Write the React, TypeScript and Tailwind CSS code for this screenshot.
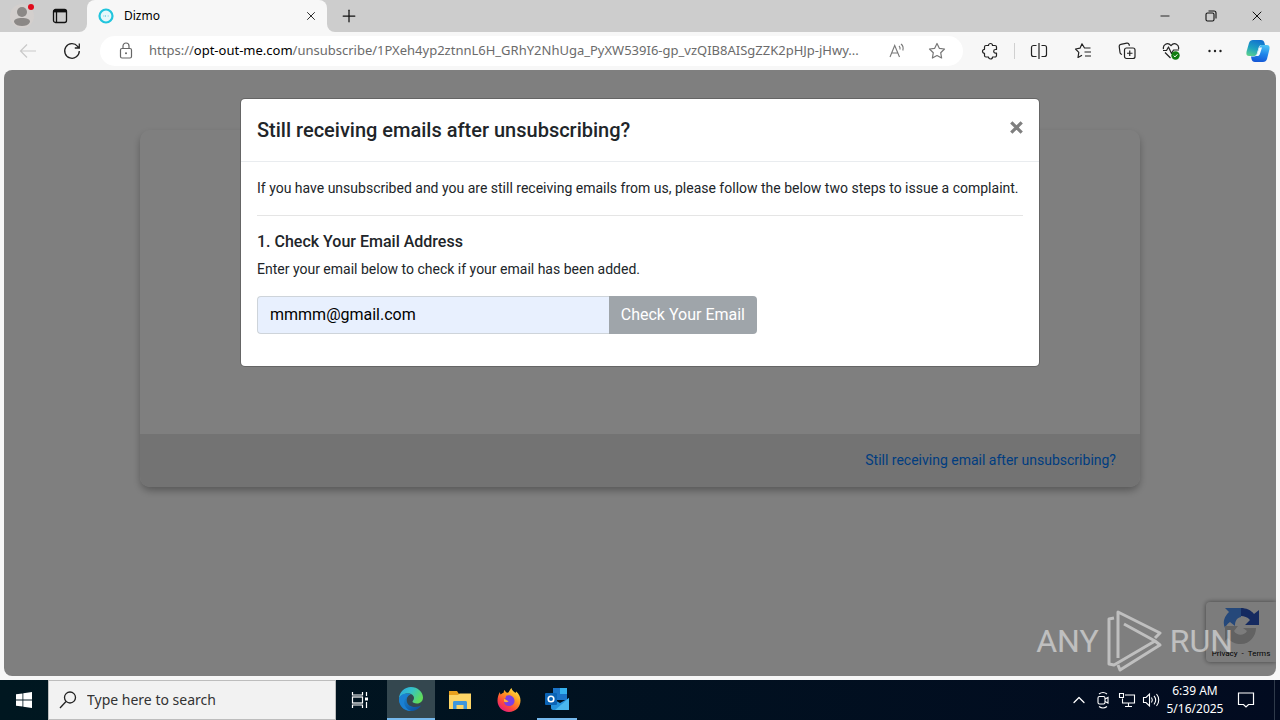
import React, { useState } from "react";

// Icons
import {
  LuChevronUp,
  LuMinus,
  LuPlus,
  LuX,
} from "react-icons/lu";

type IconProps = { className?: string };

const UserIcon = () => (
  <svg viewBox="0 0 24 24" className="size-6" aria-hidden="true">
    <circle cx="12" cy="12" r="12" fill="#d3cfcd" />
    <circle cx="12" cy="8" r="5" fill="#8b8886" />
    <path d="M4 18c0-3 3-4 8-4s8 1 8 4c-1.500 3-4.500 4-8 4s-6.500-1-8-4z" fill="#8b8886" />
    <circle cx="21" cy="3" r="3" fill="#e00b1c" />
  </svg>
);

const WorkspaceIcon = () => (
  <svg viewBox="0 0 16 16" className="size-4" fill="none" stroke="#111" strokeWidth="1.300" aria-hidden="true">
    <rect x="1.500" y="1.500" width="13" height="13" rx="2" />
    <path d="M1.500 3.200h13" strokeWidth="2.400" />
    <path d="M4.500 4v10.500" />
  </svg>
);

const BackIcon = () => (
  <svg viewBox="0 0 18 18" className="size-[18px]" fill="none" stroke="#c9c9c9" strokeWidth="1.200" aria-hidden="true">
    <path d="M17 9H1.500M8 2.500L1.500 9 8 15.500" />
  </svg>
);

const ReloadIcon = () => (
  <svg viewBox="0 0 18 18" className="size-[18px]" fill="none" stroke="#222" strokeWidth="1.300" aria-hidden="true">
    <path d="M16.300 9A7.300 7.300 0 1 1 14.600 4.300L16 6M16.300 1.500V6h-4.500" />
  </svg>
);

const LockIcon = () => (
  <svg viewBox="0 0 16 18" className="h-[18px] w-4" fill="none" stroke="#666" strokeWidth="1.200" aria-hidden="true">
    <rect x="2.500" y="6.500" width="11" height="9.500" rx="1.500" />
    <path d="M5 6.500V4a3 3 0 0 1 6 0v2.500" />
    <circle cx="8" cy="11.300" r="1" fill="#666" stroke="none" />
  </svg>
);

const ReadAloudIcon = () => (
  <svg viewBox="0 0 18 18" className="size-[18px]" fill="none" stroke="#777" strokeWidth="1.100" aria-hidden="true">
    <path d="M2 15L6.700 3.500 11.500 15M3.600 11h6.300M11 4c1 .8 1.300 2 1 3.500M13 2c2 1.500 2.500 4 1.800 6.500" />
  </svg>
);

const StarIcon = () => (
  <svg viewBox="0 0 18 18" className="size-[18px]" fill="none" stroke="#777" strokeWidth="1.200" strokeLinejoin="round" aria-hidden="true">
    <path d="M9 1.500l2.300 4.800 5.200.7-3.800 3.700.9 5.300L9 13.500 4.400 16l.9-5.300L1.500 7l5.200-.7z" />
  </svg>
);

const PuzzleIcon = () => (
  <svg viewBox="0 0 18 18" className="size-[18px]" fill="none" stroke="#222" strokeWidth="1.200" strokeLinejoin="round" aria-hidden="true">
    <path d="M5 3.500h2.500a2 2 0 0 1 4 0H14a1.500 1.500 0 0 1 1.500 1.500v2.500h-1a1.800 1.800 0 0 0 0 3.600h1v2.400a1.500 1.500 0 0 1-1.500 1.500h-2.500a2 2 0 0 1-4 0H5A1.500 1.500 0 0 1 3.500 13.500v-2.200a2 2 0 0 1 0-4V5A1.500 1.500 0 0 1 5 3.500z" />
  </svg>
);

const SplitIcon = () => (
  <svg viewBox="0 0 18 18" className="size-[18px]" fill="none" stroke="#222" strokeWidth="1.200" aria-hidden="true">
    <path d="M9 1v16M6.500 3.500h-3a2 2 0 0 0-2 2v7a2 2 0 0 0 2 2h3M11.500 3.500h3a2 2 0 0 1 2 2v7a2 2 0 0 1-2 2h-3" />
  </svg>
);

const FavoritesIcon = () => (
  <svg viewBox="0 0 18 18" className="size-[18px]" fill="none" stroke="#222" strokeWidth="1.200" strokeLinejoin="round" aria-hidden="true">
    <path d="M16.500 6H10.500L8 1.800 6 6.200 1.500 7l3.300 3.300-.8 5.200 4-2.300M10.500 10h6.500M11 14h6" />
  </svg>
);

const CollectionsIcon = () => (
  <svg viewBox="0 0 18 18" className="size-[18px]" fill="none" stroke="#222" strokeWidth="1.200" aria-hidden="true">
    <rect x="6.500" y="6" width="10.500" height="10.500" rx="2" />
    <path d="M11.750 8.500v5.500M9 11.250h5.500M4 12.500l-1-.5a2 2 0 0 1-1-1.500L1.200 4.500a2 2 0 0 1 1.600-2.200l6-1.200a2 2 0 0 1 2.300 1.400l.4 1.300" />
  </svg>
);

const HealthIcon = () => (
  <svg viewBox="0 0 18 18" className="size-[18px]" fill="none" stroke="#222" strokeWidth="1.200" strokeLinejoin="round" aria-hidden="true">
    <path d="M1.500 7.200C.5 3 5.500-.5 9 3.700c3.500-4.200 8.500-.7 7.500 3.500M3 10.500l5.500 5.500M1 8.500h3.500L6.500 5l3 6.500L11.500 8H17" />
    <circle cx="13.500" cy="13.500" r="4.200" fill="#107c10" stroke="none" />
    <path d="M11.700 13.600l1.300 1.300 2.400-2.600" stroke="#fff" strokeWidth="1" />
  </svg>
);

const MoreIcon = () => (
  <svg viewBox="0 0 18 18" className="size-[18px]" fill="#222" aria-hidden="true">
    <circle cx="3.500" cy="9" r="1.200" />
    <circle cx="9" cy="9" r="1.200" />
    <circle cx="14.500" cy="9" r="1.200" />
  </svg>
);

const CopilotIcon = () => (
  <svg viewBox="0 0 24 24" className="size-6" aria-hidden="true">
    <defs>
      <linearGradient id="copilotLeft" x1="0.600" y1="0" x2="0.200" y2="1">
        <stop offset="0" stopColor="#1272cf" />
        <stop offset="0.550" stopColor="#1fa3c0" />
        <stop offset="1" stopColor="#5bd08d" />
      </linearGradient>
      <linearGradient id="copilotRight" x1="0.600" y1="0" x2="0.400" y2="1">
        <stop offset="0" stopColor="#4bc3f5" />
        <stop offset="0.500" stopColor="#1f86ea" />
        <stop offset="1" stopColor="#1557d6" />
      </linearGradient>
    </defs>
    <path d="M7 1h8c2 0 3 1 3.500 3l.5 2h-3c-2 0-3 1-3.500 3l-1.800 6c-.5 2-1.500 2-3.200 2H3c-3 0-3-3-2-6l2-7c.6-2 2-3 4-3z" fill="url(#copilotLeft)" />
    <path d="M17 23H9c-2 0-3-1-3.500-3L5 17.500h3c2 0 3-1 3.500-3l1.800-6c.5-2 1.500-2.500 3.200-2.500H21c3 0 3 3 2 6l-2 8c-.6 2-2 3-4 3z" fill="url(#copilotRight)" />
    <path d="M13.300 8.500H16l-2 6.200c-.5 1.600-1.200 2.300-3 2.300H8.500c1.500 0 2.400-1 2.900-2.700z" fill="#f2fbff" />
  </svg>
);

const RestoreIcon = () => (
  <svg viewBox="0 0 12 12" className="size-3" fill="none" stroke="#111" strokeWidth="1.100" aria-hidden="true">
    <rect x="1" y="3" width="8" height="8" rx="1.500" />
    <path d="M3.500 1H9a2 2 0 0 1 2 2v5.500" />
  </svg>
);

const RecaptchaIcon = () => (
  <svg viewBox="0 0 40 40" className="size-10" aria-hidden="true">
    <path d="M38 4v15H24l5-5c-2.500-3-6-4-9-4V2c5 0 10 2 13 6z" fill="#2a55c0" />
    <path d="M4 2h16v9c-5 1-6 5-6 9l-5-4c-3 2-4 4-5 6-3-7 0-12 4-16z" fill="#4a90f5" />
    <path d="M4 20h13l-4 5c3 5 10 5 13 0l-4-3h13c0 8-6 16-15 16-6 0-10-2-13-6l-3 3z" fill="#c4c4c4" />
  </svg>
);

const WatermarkIcon = () => (
  <svg viewBox="0 0 55 62" className="h-[62px] w-[55px]" fill="none" stroke="#fff" strokeWidth="3" strokeLinejoin="round" aria-hidden="true">
    <path d="M7 8l-5 1v45l5 1 41-24-31-17M11 48V2l42 21-5 5M11 55l2 5 40-25-5-4" />
  </svg>
);

const WindowsIcon = () => (
  <svg viewBox="0 0 16 16" className="size-4" fill="#fff" aria-hidden="true">
    <path d="M0 2.300L6.500 1.400v6.200H0zM7.300 1.300L16 0v7.600H7.300zM0 8.400h6.500v6.200L0 13.700zM7.300 8.400H16V16l-8.700-1.300z" />
  </svg>
);

const SearchIcon = () => (
  <svg viewBox="0 0 18 18" className="size-[18px]" fill="none" stroke="#222" strokeWidth="1.300" aria-hidden="true">
    <circle cx="11" cy="6.500" r="5.500" />
    <path d="M7 10.500L1 17" />
  </svg>
);

const TaskViewIcon = () => (
  <svg viewBox="0 0 18 18" className="size-[18px]" fill="none" stroke="#fff" strokeWidth="1.200" aria-hidden="true">
    <path d="M1.500 1v3h10V1M1.500 17v-3h10v3M15.500 1v4M15.500 11v6" />
    <rect x="1.500" y="6" width="10" height="6" />
    <rect x="14" y="6.500" width="3" height="3" fill="#fff" stroke="none" />
  </svg>
);

const EdgeIcon = () => (
  <svg viewBox="0 0 24 24" className="size-6" aria-hidden="true">
    <defs>
      <linearGradient id="edgeTop" x1="0" y1="0" x2="1" y2="0.500">
        <stop offset="0" stopColor="#2aa5e0" />
        <stop offset="0.500" stopColor="#35c1c9" />
        <stop offset="1" stopColor="#5fdc5b" />
      </linearGradient>
      <linearGradient id="edgeBottom" x1="0" y1="0" x2="1" y2="1">
        <stop offset="0" stopColor="#1d90dd" />
        <stop offset="1" stopColor="#0c4a96" />
      </linearGradient>
    </defs>
    <path d="M0 12C0 5 5.500 0 12 0s12 5 12 10.500c0 3.500-2.500 6-6 6-3 0-4.500-1.200-4.500-2 0-.8 1.500-1.500 1.500-3.500 0-2.500-2.500-4.500-6-4.500C4 6.500.5 9 0 12z" fill="url(#edgeTop)" />
    <path d="M0 12c.5-3.500 4-5.500 8-5.500 1.500 0 3 .5 4 1-3 .6-4.300 3-4.300 5.500 0 5 4.300 7 8.300 7 2.500 0 4.500-.8 6-1.500C20 22 16 24 12 24 5 24 0 18.500 0 12z" fill="url(#edgeBottom)" />
    <path d="M9 9c-3 2-4.500 5-3.500 8.500S10 23.500 12.500 24c-7 .5-12.500-5-12.500-12C1 8 6 6.500 9 9z" fill="#1a80d2" />
  </svg>
);

const ExplorerIcon = () => (
  <svg viewBox="0 0 24 22" className="h-[22px] w-6" aria-hidden="true">
    <path d="M1 2h8l2 3h12v4H1z" fill="#e9a11d" />
    <path d="M1 6h9l1.500-1.500H23V20H1z" fill="#fdd566" />
    <path d="M5 20v-6.500c0-1 .6-1.500 1.500-1.500h11c.9 0 1.500.5 1.500 1.500V20h-3.500v-4h-7v4z" fill="#3f97dc" />
  </svg>
);

const FirefoxIcon = () => (
  <svg viewBox="0 0 24 24" className="size-6" aria-hidden="true">
    <defs>
      <linearGradient id="foxFire" x1="0.900" y1="0" x2="0.200" y2="1">
        <stop offset="0" stopColor="#fff14f" />
        <stop offset="0.400" stopColor="#ff9a1f" />
        <stop offset="0.700" stopColor="#ff4a3a" />
        <stop offset="1" stopColor="#e31587" />
      </linearGradient>
    </defs>
    <path d="M3 4c0 1 .2 2 .6 2.500C4.500 5.600 5.500 5 6.500 5c0-1 .5-2.300 1.300-3 .3 1.500 1.200 2.400 2.700 2.800C12 4.500 12.500 2 14.500 0c.5 2.500 2.500 3.500 4 5l.7-1.500c3 2.500 4.300 5.500 4.300 9C23.500 19 18.500 24 12 24S.5 19 .5 12.800C.5 9.500 1.500 6 3 4z" fill="url(#foxFire)" />
    <path d="M9 8c2.500-1.500 8-.5 8.500 4.500.3 3-2 5.500-5.500 5.500-3 0-5-2-5-4.500 1.500 1 3.500 1 4.500-.5-2 0-2.500-1.500-4-2.500 1 0 1.500-1 1.500-2.500z" fill="#7b3fe4" />
    <path d="M7 13.500c1.500 1 3.500 1 4.500-.5-2 0-2.500-1.500-4.500-2.200z" fill="#ffb43a" />
  </svg>
);

const OutlookIcon = () => (
  <svg viewBox="0 0 24 22" className="h-[22px] w-6" aria-hidden="true">
    <path d="M8 0h14v12H8z" fill="#1b74c8" />
    <path d="M15 0h7v6h-7z" fill="#35b1ee" />
    <path d="M6 10l9 5 9-5v12H8c-1 0-2-.8-2-2z" fill="#2492dc" />
    <path d="M24 10v12H10z" fill="#4ab8ee" />
    <rect y="5" width="12" height="12" rx="1" fill="#0a63b5" />
    <circle cx="6" cy="11" r="2.800" fill="none" stroke="#fff" strokeWidth="1.600" />
  </svg>
);

const MeetIcon = () => (
  <svg viewBox="0 0 16 18" className="h-[18px] w-4" fill="none" stroke="#fff" strokeWidth="1.100" aria-hidden="true">
    <rect x="3" y="5.500" width="7" height="7.500" rx="1.500" />
    <path d="M10 8l3-1.500V12L10 10.500M4 3c2.500-1.800 5.500-1.800 8 0M4 15.500c2.500 1.800 5.500 1.800 8 0" />
  </svg>
);

const NetworkIcon = () => (
  <svg viewBox="0 0 18 16" className="h-4 w-[18px]" fill="none" stroke="#fff" strokeWidth="1.100" aria-hidden="true">
    <path d="M7 3h9.500v8H4.500V6.500M10.500 11v3.500M7 14.500h7M1.500 1.500h4v4h-4z" />
  </svg>
);

const VolumeIcon = () => (
  <svg viewBox="0 0 18 16" className="h-4 w-[18px]" fill="none" stroke="#fff" strokeWidth="1.100" aria-hidden="true">
    <path d="M1.500 5.500h2.500L7.500 2v12L4 10.500H1.500zM9.500 5.500c1 1.500 1 3.500 0 5M12 3.800c2 2.500 2 6 0 8.500M14.500 2c3 3.500 3 8.500 0 12" />
  </svg>
);

const NotificationIcon = () => (
  <svg viewBox="0 0 18 18" className="size-[18px]" fill="none" stroke="#fff" strokeWidth="1.200" aria-hidden="true">
    <path d="M1.500 2h15v11.500h-5L9 16l-2.500-2.500h-5z" />
  </svg>
);

const toolbarItems: { label: string; Icon: React.FC<IconProps> }[] = [
  { label: "Split screen", Icon: SplitIcon },
  { label: "Favorites", Icon: FavoritesIcon },
  { label: "Collections", Icon: CollectionsIcon },
  { label: "Browser essentials", Icon: HealthIcon },
  { label: "Settings and more", Icon: MoreIcon },
];

const trayItems: { label: string; Icon: React.FC<IconProps> }[] = [
  { label: "Meet Now", Icon: MeetIcon },
  { label: "Network", Icon: NetworkIcon },
  { label: "Volume", Icon: VolumeIcon },
];

const TabStrip = () => (
  <div className="flex h-8 bg-[#f7f7f7]">
    <div className="flex w-[87px] shrink-0 items-center gap-[14px] rounded-br-lg bg-[#cdcdcd] pl-[10px]">
      <button type="button" aria-label="Profile" className="flex size-7 items-center">
        <UserIcon />
      </button>
      <button type="button" aria-label="Workspaces" className="flex items-center">
        <WorkspaceIcon />
      </button>
    </div>
    <div className="w-60 shrink-0 bg-[#cdcdcd]">
      <div className="flex h-full items-center rounded-t-lg bg-[#f7f7f7] pr-2 pl-[11px]">
        <svg viewBox="0 0 16 16" className="size-4" aria-hidden="true">
          <circle cx="8" cy="8" r="6.500" fill="#e6f8fb" stroke="#21c5dd" strokeWidth="2.200" />
          <path d="M5 8h1.500M7.500 7v2M9.500 8H11" stroke="#8fdbe8" />
        </svg>
        <span className="flex-1 pl-[10px] text-xs text-black">Dizmo</span>
        <button type="button" aria-label="Close tab" className="p-px">
          <LuX className="size-[14px] text-[#111]" strokeWidth={1.5} />
        </button>
      </div>
    </div>
    <div className="flex flex-1 items-center justify-between rounded-bl-lg bg-[#cdcdcd]">
      <button type="button" aria-label="New tab" className="ml-3">
        <LuPlus className="size-5 text-[#111]" strokeWidth={1.5} />
      </button>
      <div className="flex h-full">
        <button type="button" aria-label="Minimize" className="flex w-[46px] items-center justify-center">
          <LuMinus className="size-[14px] text-[#111]" strokeWidth={1.5} />
        </button>
        <button type="button" aria-label="Restore" className="flex w-[46px] items-center justify-center">
          <RestoreIcon />
        </button>
        <button type="button" aria-label="Close" className="flex w-[46px] items-center justify-center">
          <LuX className="size-4 text-[#111]" strokeWidth={1.5} />
        </button>
      </div>
    </div>
  </div>
);

const AddressBar = () => {
  const [editing, setEditing] = useState(false);
  const host = "opt-out-me.com";
  const path = "/unsubscribe/1PXeh4yp2ztnnL6H_GRhY2NhUga_PyXW539I6-gp_vzQIB8AISgZZK2pHJp-jHwy...";

  return (
    <div className="flex h-[30px] min-w-0 flex-1 items-center rounded-full bg-white pr-[17px] pl-[18px]">
      <button type="button" aria-label="View site information">
        <LockIcon />
      </button>
      {editing ? (
        <input
          aria-label="Address"
          defaultValue={`https://${host}${path}`}
          onBlur={() => setEditing(false)}
          autoFocus
          className="ml-[15px] min-w-0 flex-1 text-[13px] outline-none"
        />
      ) : (
        <button
          type="button"
          onClick={() => setEditing(true)}
          className="ml-[15px] min-w-0 flex-1 overflow-hidden text-left text-[13px] whitespace-nowrap text-[#6b6b6b]"
        >
          https://<span className="text-black">{host}</span>
          {path}
        </button>
      )}
      <div className="flex gap-[22px] pl-3">
        <button type="button" aria-label="Read aloud">
          <ReadAloudIcon />
        </button>
        <button type="button" aria-label="Add to favorites">
          <StarIcon />
        </button>
      </div>
    </div>
  );
};

const Toolbar = () => (
  <div className="flex h-[38px] items-center bg-[#f7f7f7]">
    <div className="flex w-[100px] shrink-0 gap-[26px] pl-[19px]">
      <button type="button" aria-label="Back">
        <BackIcon />
      </button>
      <button type="button" aria-label="Refresh">
        <ReloadIcon />
      </button>
    </div>
    <AddressBar />
    <div className="flex shrink-0 items-center pr-px pl-[5px]">
      <button type="button" aria-label="Extensions" className="flex w-11 justify-center">
        <PuzzleIcon />
      </button>
      <div className="mx-[2px] h-4 w-px bg-[#d0d0d0]" />
      {toolbarItems.map(({ label, Icon }) => (
        <button key={label} type="button" aria-label={label} className="flex w-11 justify-center">
          <Icon />
        </button>
      ))}
      <button type="button" aria-label="Copilot" className="flex w-[42px] justify-center">
        <CopilotIcon />
      </button>
    </div>
  </div>
);

const ComplaintModal = () => {
  const [email, setEmail] = useState("mmmm@gmail.com");

  return (
    <div className="absolute inset-0 bg-black/50 px-4 pt-7">
      <div
        role="dialog"
        aria-labelledby="complaint-title"
        className="mx-auto max-w-[800px] rounded-[5px] border border-black/20 bg-white bg-clip-padding text-[#212529]"
      >
        <div className="flex items-start justify-between border-b border-[#e9ecef] p-4">
          <h1 id="complaint-title" className="text-xl leading-[30px] font-medium">
            Still receiving emails after unsubscribing?
          </h1>
          <button type="button" aria-label="Close" className="pt-[6px]">
            <svg viewBox="0 0 12 12" className="size-[13px]" stroke="#7f7f7f" strokeWidth="3" aria-hidden="true">
              <path d="M1.200 1.200l9.600 9.600M10.800 1.200l-9.600 9.600" />
            </svg>
          </button>
        </div>
        <div className="p-4 pb-8 text-sm leading-[21px]">
          <p>
            If you have unsubscribed and you are still receiving emails from us, please follow the
            below two steps to issue a complaint.
          </p>
          <hr className="my-4 border-[#e5e5e5]" />
          <h2 className="mb-2 text-base leading-[19px] font-medium">1. Check Your Email Address</h2>
          <label htmlFor="email" className="block">
            Enter your email below to check if your email has been added.
          </label>
          <form
            className="mt-4 flex h-[38px] max-w-[500px] text-base"
            onSubmit={(e) => e.preventDefault()}
          >
            <input
              id="email"
              type="email"
              value={email}
              onChange={(e) => setEmail(e.target.value)}
              className="min-w-0 flex-1 rounded-l border border-r-0 border-[#ced4da] bg-[#e8f0fe] px-3 text-black outline-none"
            />
            <button type="submit" className="rounded-r bg-[#9fa5aa] px-3 text-white">
              Check Your Email
            </button>
          </form>
        </div>
      </div>
    </div>
  );
};

const Page = () => (
  <main className="relative mx-1 mb-1 flex-1 overflow-hidden rounded-lg bg-white font-[Roboto,sans-serif]">
    <div className="px-4 pt-[60px] pb-10">
      <div className="mx-auto max-w-[1000px] overflow-hidden rounded-[10px] shadow-[0_4px_8px_-1px_rgba(0,0,0,0.35)]">
        <div className="h-[304px]" />
        <div className="bg-[#e6e6e6] px-6 py-4 text-right text-sm leading-[21px]">
          <a href="#complaint" className="text-[#007bff]">
            Still receiving email after unsubscribing?
          </a>
        </div>
      </div>
    </div>
    <div className="absolute right-0 bottom-[14px] flex h-[60px] w-[70px] flex-col items-center rounded-l bg-[#f9f9f9] pt-1 shadow-[0_0_5px_gray]">
      <RecaptchaIcon />
      <div className="mt-[2px] flex gap-1 text-[8px] leading-[12px] whitespace-nowrap text-black">
        <a href="#privacy">Privacy</a>
        <span>-</span>
        <a href="#terms">Terms</a>
      </div>
    </div>
    <ComplaintModal />
    {/* Watermark */}
    <div className="absolute right-[43px] bottom-1 flex items-center gap-2 text-[32px] leading-none text-white opacity-50">
      <span>ANY</span>
      <WatermarkIcon />
      <span>RUN</span>
    </div>
  </main>
);

const Taskbar = () => (
  <footer className="flex h-10 items-stretch bg-linear-to-r from-[#001720] to-[#020b20] text-white">
    <button type="button" aria-label="Start" className="flex w-12 items-center justify-center">
      <WindowsIcon />
    </button>
    <div className="flex w-72 items-center gap-[10px] border border-[#bdbdbd] bg-[#f2f2f2] px-[10px]">
      <SearchIcon />
      <input
        type="text"
        aria-label="Search"
        placeholder="Type here to search"
        className="min-w-0 flex-1 text-sm text-black outline-none placeholder:text-[#333]"
      />
    </div>
    <button type="button" aria-label="Task view" className="mr-[3px] flex w-12 items-center justify-center">
      <TaskViewIcon />
    </button>
    <button type="button" aria-label="Microsoft Edge" className="flex w-12 items-center justify-center border-b-2 border-[#76b9ed] bg-[#34474f]">
      <EdgeIcon />
    </button>
    <button type="button" aria-label="File Explorer" className="flex w-[49px] items-center justify-center">
      <ExplorerIcon />
    </button>
    <button type="button" aria-label="Firefox" className="flex w-[49px] items-center justify-center">
      <FirefoxIcon />
    </button>
    <button type="button" aria-label="Outlook" className="mx-1 flex w-10 items-center justify-center border-b-2 border-[#76b9ed]">
      <OutlookIcon />
    </button>
    <div className="ml-auto flex items-center">
      <button type="button" aria-label="Show hidden icons" className="flex w-6 justify-center">
        <LuChevronUp className="size-5" strokeWidth={1.5} />
      </button>
      {trayItems.map(({ label, Icon }) => (
        <button key={label} type="button" aria-label={label} className="flex w-6 justify-center">
          <Icon />
        </button>
      ))}
      <div className="w-16 text-center text-xs leading-[18px]">
        <div>6:39 AM</div>
        <div>5/16/2025</div>
      </div>
      <button type="button" aria-label="Notifications" className="flex w-12 items-center justify-start self-stretch border-r border-[#2f3a4a] pl-[10px]">
        <NotificationIcon />
      </button>
      <div className="w-[5px]" />
    </div>
  </footer>
);

const App = () => {
  return (
    <div className="flex min-h-screen flex-col bg-[#f7f7f7] font-['Noto_Sans','Open_Sans',sans-serif]">
      <TabStrip />
      <Toolbar />
      <Page />
      <Taskbar />
    </div>
  );
};

export default App;
